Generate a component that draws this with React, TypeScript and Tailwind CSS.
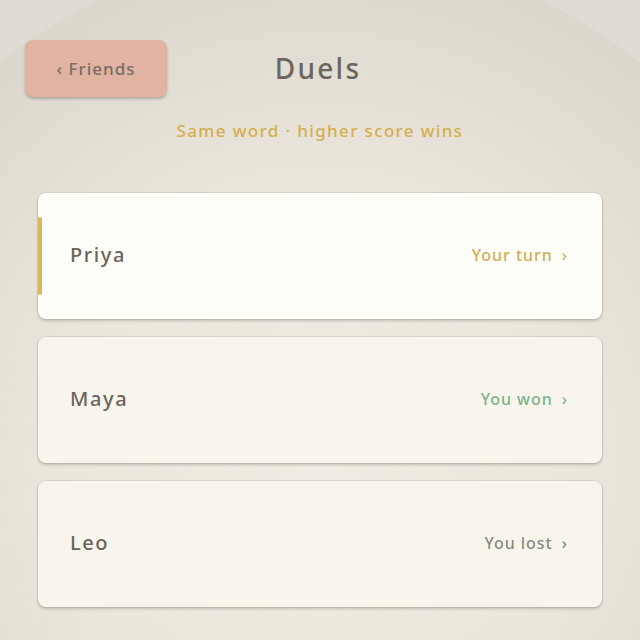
import React from 'react'

type Duel = {
  name: string;
  status: string;
  tone: 'turn' | 'won' | 'lost';
  active?: boolean;
}

const duels: Duel[] = [
  { name: 'Priya', status: 'Your turn', tone: 'turn', active: true },
  { name: 'Maya', status: 'You won', tone: 'won' },
  { name: 'Leo', status: 'You lost', tone: 'lost' },
]

const toneClass = {
  turn: 'text-[#d0ad58]',
  won: 'text-[#79b48c]',
  lost: 'text-[#8e8983]',
}

function DuelCard({ duel }: { duel: Duel }) {
  return (
    <div
      className={
        'relative h-[126px] rounded-[8px] flex items-center justify-between pl-[32px] pr-[34px] shadow-[0_2px_3px_rgba(120,110,95,0.35),0_0_0_1px_rgba(200,194,180,0.45)] ' +
        (duel.active ? 'bg-[#fffdf7]' : 'bg-[#f8f5ec]')
      }
    >
      {duel.active && (
        <div className="absolute left-0 top-[24px] h-[78px] w-[4px] rounded-full bg-[#d8b95a]" />
      )}
      <span className="text-[20px] font-medium tracking-[0.08em] text-[#6b645c] -mt-[2px]">{duel.name}</span>
      <span className={'text-[16px] font-medium tracking-[0.06em] -mt-[2px] ' + toneClass[duel.tone]}>
        {duel.status} <span className="ml-[4px]">›</span>
      </span>
    </div>
  )
}

export default function App() {
  return (
    <div className="relative w-[640px] h-[640px] overflow-hidden bg-[#dfdcd4] font-['Noto_Sans',sans-serif]">
      {/* big circle backdrop */}
      <div className="absolute left-[-190px] top-[-50px] w-[1020px] h-[1020px] rounded-full bg-[radial-gradient(circle_at_50%_50%,#f0ece3_0%,#ebe7dd_35%,#dfdbd1_62%,#cfcbc1_100%)]" />
      <div className="relative flex flex-col">
        <div className="relative h-[58px] mt-[40px] flex items-center justify-center">
          <button className="absolute left-[25px] top-0 w-[142px] h-[57px] rounded-[8px] bg-[#e0b3a2] shadow-[0_2px_3px_rgba(120,110,95,0.45)] text-[17px] font-medium tracking-[0.06em] text-[#7a6e66]">
            ‹ Friends
          </button>
          <h1 className="text-[28px] font-medium tracking-[0.08em] text-[#6e665e] -mt-[3px] -ml-[4px]">Duels</h1>
        </div>
        <p className="mt-[20px] text-center text-[17px] font-medium tracking-[0.08em] text-[#d4b04e]">
          Same word · higher score wins
        </p>
        <div className="mt-[49px] px-[38px] flex flex-col gap-[18px]">
          {duels.map((d) => (
            <DuelCard key={d.name} duel={d} />
          ))}
        </div>
      </div>
    </div>
  )
}
